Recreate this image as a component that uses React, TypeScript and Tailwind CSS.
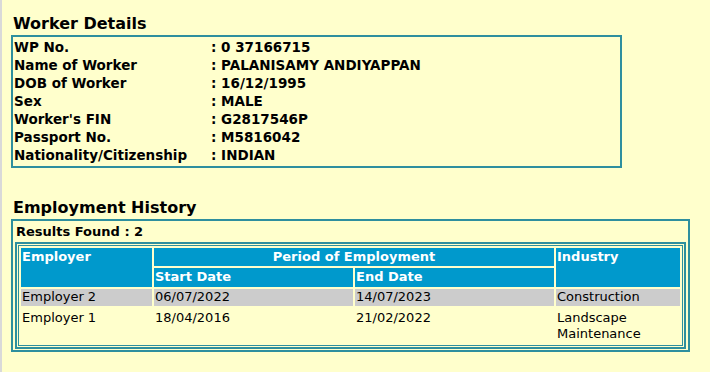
import React from "react";

const WORKER: [string, string][] = [
  ["WP No.", "0 37166715"],
  ["Name of Worker", "PALANISAMY ANDIYAPPAN"],
  ["DOB of Worker", "16/12/1995"],
  ["Sex", "MALE"],
  ["Worker's FIN", "G2817546P"],
  ["Passport No.", "M5816042"],
  ["Nationality/Citizenship", "INDIAN"],
];

const HISTORY = [
  { employer: "Employer 2", start: "06/07/2022", end: "14/07/2023", industry: "Construction" },
  { employer: "Employer 1", start: "18/04/2016", end: "21/02/2022", industry: "Landscape Maintenance" },
];

export default function App() {
  return (
    <div className="min-h-screen bg-[#ffffcc] border-l-2 border-[#d9d9d9] pl-[9px] pt-[13px] text-black font-['Verdana','DejaVu_Sans',sans-serif]">
      {/* Worker details */}
      <h2 className="text-[16px] font-bold leading-[22px] pl-[2px]">Worker Details</h2>
      <div className="w-[611px] border-2 border-[#2e8f9e] px-[1px] pt-[1px] pb-[2px]">
        {WORKER.map(([label, value]) => (
          <div key={label} className="flex text-[13.5px] font-bold leading-[18px]">
            <span className="w-[197px] shrink-0">{label}</span>
            <span>: {value}</span>
          </div>
        ))}
      </div>

      {/* Employment history */}
      <h2 className="text-[16px] font-bold leading-[22px] pl-[2px] mt-[29px]">Employment History</h2>
      <div className="w-[679px] border-2 border-[#2e8f9e] px-[2px] pb-[1px]">
        <p className="text-[13px] font-bold leading-[21px] pl-[1px]">Results Found : 2</p>
        <div className="border-2 border-[#2e8f9e] p-[1px]">
          <div className="border border-[#2e8f9e]">
            <table className="w-full border-separate border-spacing-[2px] text-[13px]">
              <thead className="leading-[16px]">
                <tr className="text-white font-bold text-left align-top">
                  <th rowSpan={2} className="bg-[#0099cc] w-[131px] px-[1px] py-[1px]">Employer</th>
                  <th colSpan={2} className="bg-[#0099cc] text-center px-[1px] py-[1px]">Period of Employment</th>
                  <th rowSpan={2} className="bg-[#0099cc] w-[124px] px-[1px] py-[1px]">Industry</th>
                </tr>
                <tr className="text-white font-bold text-left">
                  <th className="bg-[#0099cc] w-[199px] px-[1px] pt-[1px] pb-[2px]">Start Date</th>
                  <th className="bg-[#0099cc] px-[1px] pt-[1px] pb-[2px]">End Date</th>
                </tr>
              </thead>
              <tbody className="leading-[16px]">
                {HISTORY.map((r, i) => {
                  const pad = i === 0 ? "px-[1px] pb-[1px]" : "px-[1px] pt-[2px] pb-[1px]";
                  return (
                    <tr key={r.employer} className={`align-top ${i === 0 ? "bg-[#cccccc]" : ""}`}>
                      <td className={pad}>{r.employer}</td>
                      <td className={pad}>{r.start}</td>
                      <td className={pad}>{r.end}</td>
                      <td className={pad}>{r.industry}</td>
                    </tr>
                  );
                })}
              </tbody>
            </table>
          </div>
        </div>
      </div>
    </div>
  );
}
